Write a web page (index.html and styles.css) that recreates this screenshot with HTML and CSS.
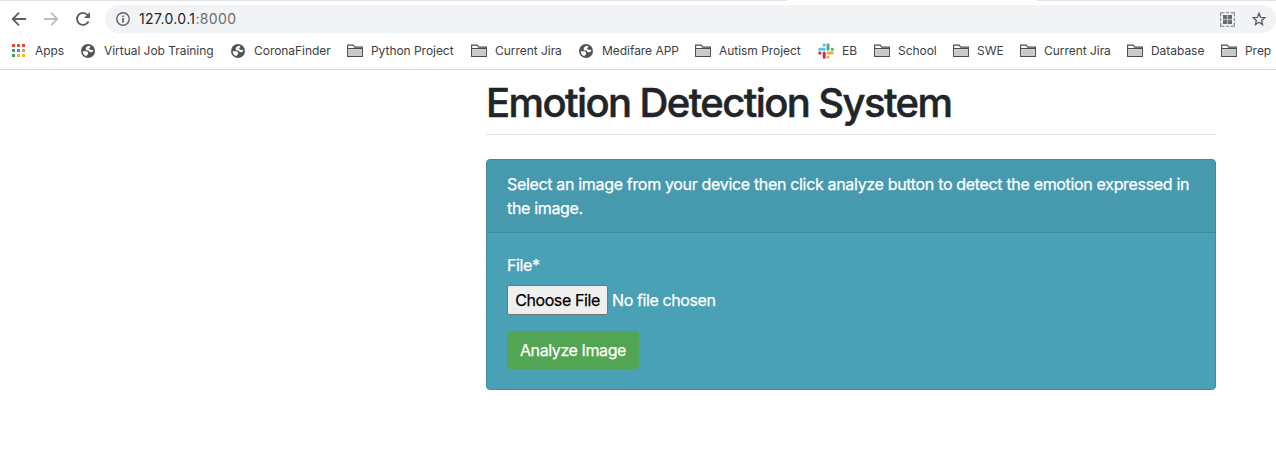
FILE: index.html
```html
<!DOCTYPE html>
<html lang="en">
<head>
<meta charset="utf-8">
<title>Emotion Detection System</title>
<link rel="stylesheet" href="styles.css">
</head>
<body>
<svg class="defs" aria-hidden="true">
  <symbol id="globe" viewBox="0 0 14 14"><circle cx="7" cy="7" r="7" fill="#505458"/><path d="M8.500 1.700C6.500 1.900 4.700 3.400 4.700 4.900c0 1.200 1.200 1.500 2.500 1.500.8 0 .8 1.900 2.500 1.900 1.300 0 2.200-.6 2.600-1.500L12 5.700c-1.300.4-1.900.7-2.500 0-.5-.6-.9-1-2-.9.200-1.100 1.900-.9 2-2zM1.700 7.300c.1 2.400 1.500 4.300 3.800 4.900 0-1.500 1.700-1.400 1.700-2.900 0-1.400-1.300-2-2.700-2z" fill="#fff"/></symbol>
  <symbol id="folder" viewBox="0 0 16 14"><path d="M.6 12.400V1.100h5.600l1.500 2h7.700v9.300z" fill="#fff" stroke="#4b4b4b" stroke-width="1.100"/><path d="M1.200 5.200h13.600v6.600H1.200z" fill="#c9c9c9"/><path d="M1 4.500h14" stroke="#4b4b4b"/></symbol>
</svg>
<header class="browser">
  <div class="tab-line"><span class="tab-left"></span><span class="tab-right"></span></div>
  <div class="toolbar">
    <svg class="nav" viewBox="0 0 16 16"><path d="M15 8H2M8 1.700 1.700 8 8 14.300" fill="none" stroke="#5a5d61" stroke-width="1.800"/></svg>
    <svg class="nav" viewBox="0 0 16 16"><path d="M1 8h13M8 1.700 14.300 8 8 14.300" fill="none" stroke="#bcbec1" stroke-width="1.800"/></svg>
    <svg class="nav" viewBox="0 0 16 16"><path d="M13.500 10.300A6 6 0 1 1 12.600 4" fill="none" stroke="#5a5d61" stroke-width="1.900"/><path d="M15 1v6H9z" fill="#5a5d61"/></svg>
    <div class="address">
      <svg class="info" viewBox="0 0 14 14"><circle cx="7" cy="7" r="6.200" fill="none" stroke="#5f6368" stroke-width="1.400"/><path d="M7 6v4.500M7 3.400V5" stroke="#5f6368" stroke-width="1.700"/></svg>
      <span class="url">127.0.0.1<span class="port">:8000</span></span>
      <svg class="qr" viewBox="0 0 15 15"><path d="M.7 4.500V.7h3.800M6 .7h3M10.500.7h3.800v3.800M14.300 6v3M14.300 10.500v3.800h-3.800M9 14.300H6M4.500 14.300H.7v-3.800M.7 9V6" fill="none" stroke="#7d8084" stroke-width="1.100"/><path d="M3 3h9v9H3z" fill="#b0b1b3"/><path d="M3 3h3.800v3.800H3zM8.200 3H12v3.800H8.200zM3 8.200h3.800V12H3zM8.200 8.200H12V12H8.200z" fill="#65686c"/></svg>
      <svg class="star" viewBox="0 0 14 14"><path d="m7 1.300 1.600 4 4.300.3-3.300 2.800 1 4.200L7 10.300l-3.600 2.300 1-4.200L1.100 5.600l4.300-.3z" fill="none" stroke="#5a5d61" stroke-width="1.300"/></svg>
    </div>
  </div>
  <nav class="bookmarks">
    <a class="bookmark"><svg class="round" viewBox="0 0 14 14"><path d="M0 0h3v3H0zM5 0h3v3H5zM10 0h3v3h-3z" fill="#e04a3f"/><path d="M0 5h3v3H0zM0 10h3v3H0z" fill="#4c9c59"/><path d="M5 5h3v3H5z" fill="#4285f4"/><path d="M10 5h3v3h-3z" fill="#e9973c"/><path d="M5 10h3v3H5zM10 10h3v3h-3z" fill="#f2b336"/></svg><span>Apps</span></a>
    <a class="bookmark"><svg class="round"><use href="#globe"/></svg><span>Virtual Job Training</span></a>
    <a class="bookmark"><svg class="round"><use href="#globe"/></svg><span>CoronaFinder</span></a>
    <a class="bookmark"><svg class="folder"><use href="#folder"/></svg><span>Python Project</span></a>
    <a class="bookmark"><svg class="folder"><use href="#folder"/></svg><span>Current Jira</span></a>
    <a class="bookmark"><svg class="round"><use href="#globe"/></svg><span>Medifare APP</span></a>
    <a class="bookmark"><svg class="folder"><use href="#folder"/></svg><span>Autism Project</span></a>
    <a class="bookmark"><svg class="slack" viewBox="0 0 16 16" fill="none" stroke-width="3" stroke-linecap="round"><path d="M1.700 6.200h4.500M6.200 1.700v.5" stroke="#5cc3e8"/><path d="M10 1.700v4.500M14.200 6.200h.2" stroke="#52ad7b"/><path d="M10 10h4.300M10 14v.2" stroke="#e2b044"/><path d="M6.200 10v4.300M1.700 10h.4" stroke="#c92e55"/></svg><span>EB</span></a>
    <a class="bookmark"><svg class="folder"><use href="#folder"/></svg><span>School</span></a>
    <a class="bookmark"><svg class="folder"><use href="#folder"/></svg><span>SWE</span></a>
    <a class="bookmark"><svg class="folder"><use href="#folder"/></svg><span>Current Jira</span></a>
    <a class="bookmark"><svg class="folder"><use href="#folder"/></svg><span>Database</span></a>
    <a class="bookmark"><svg class="folder"><use href="#folder"/></svg><span>Prep</span></a>
  </nav>
</header>
<main class="page">
  <h1 class="title">Emotion Detection System</h1>
  <section class="card">
    <div class="card-header">Select an image from your device then click analyze button to detect the emotion expressed in<br>the image.</div>
    <form class="card-body">
      <label class="label">File*</label>
      <div class="file-row"><button type="button" class="choose">Choose File</button><span class="filename">No file chosen</span></div>
      <button type="button" class="analyze">Analyze Image</button>
    </form>
  </section>
</main>
</body>
</html>
```
FILE: styles.css
```css
* { box-sizing: border-box; }
body { margin: 0; background: #fff; color: #212529; font-family: Inter, "Liberation Sans", sans-serif; overflow: hidden; }
svg { display: block; flex: none; }
.defs { display: none; }
.browser { height: 70px; border-bottom: 1px solid #d9dadc; }
.tab-line { height: 1px; display: flex; justify-content: space-between; }
.tab-left { width: 787px; background: #dee1e6; }
.tab-right { width: 239px; background: #dee1e6; }
.toolbar { height: 36px; padding: 4px 0 4px 11px; display: flex; align-items: center; gap: 16px; }
.nav { width: 16px; height: 16px; }
.nav:nth-child(3) { margin-right: -2px; }
.address { flex: 1; height: 28px; padding: 0 10px 0 11px; border-radius: 14px; background: #f1f3f4; display: flex; align-items: center; }
.info { width: 14px; height: 14px; }
.url { margin-left: 9px; font-size: 14px; line-height: 20px; letter-spacing: 0.35px; color: #222427; }
.port { color: #696d71; }
.qr { width: 15px; height: 15px; margin-left: auto; }
.star { width: 14px; height: 14px; margin-left: 17px; }
.bookmarks { height: 28px; padding-left: 12px; display: grid; grid-template-columns: 69px 150px 116px 124px 108px 116px 123px 56px 79px 67px 107px 94px 55px; }
.bookmark { display: flex; align-items: center; white-space: nowrap; font-size: 12px; line-height: 16px; letter-spacing: -0.04px; color: #3c4043; }
.round { width: 14px; height: 14px; margin-right: 9px; }
.folder { width: 16px; height: 14px; margin-right: 8px; }
.slack { width: 16px; height: 16px; margin-right: 8px; }
.page { width: 730px; margin-left: 486px; }
.title { margin: 0; height: 65px; padding-top: 9px; border-bottom: 1px solid #e5e5e5; font-size: 40px; line-height: 48px; font-weight: 500; letter-spacing: -1.6px; -webkit-text-stroke: 0.5px #212529; white-space: nowrap; }
.card { margin-top: 24px; height: 231px; border: 1px solid #3f8b9d; border-radius: 4px; background: #4aa0b5; color: #fff; overflow: hidden; font-size: 16px; line-height: 24px; letter-spacing: -0.33px; -webkit-text-stroke: 0.25px currentColor; }
.card-header { height: 73px; padding: 12px 20px; background: #4799ad; border-bottom: 1px solid #3f8b9d; white-space: nowrap; }
.card-body { padding: 20px; letter-spacing: -0.4px; }
.label { display: block; margin-bottom: 8px; }
.file-row { display: flex; align-items: center; height: 30px; gap: 4px; }
.choose { width: 101px; height: 30px; padding: 0; border: 1px solid #767676; border-radius: 2px; background: #efefef; color: #000; font: inherit; letter-spacing: inherit; white-space: nowrap; }
.analyze { display: block; width: 132px; height: 38px; margin-top: 16px; padding: 0; border: 0; border-radius: 4px; background: #52a552; color: #fff; font: inherit; letter-spacing: inherit; }
```
